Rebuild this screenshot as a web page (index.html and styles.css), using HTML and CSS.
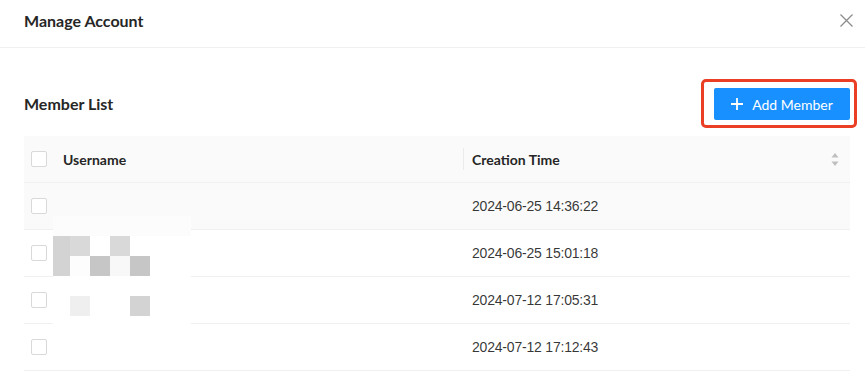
FILE: index.html
```html
<!DOCTYPE html>
<html lang="en">
<head>
<meta charset="utf-8">
<title>Manage Account</title>
<link rel="stylesheet" href="styles.css">
</head>
<body>
<div class="modal">
  <div class="modal-header">
    <div class="modal-title">Manage Account</div>
    <button class="close" aria-label="Close">
      <svg width="13" height="13" viewBox="0 0 13 13"><path d="M0.5 0.5 L12.5 12.5 M12.5 0.5 L0.5 12.5" stroke="#8c8c8c" stroke-width="1.3" fill="none"/></svg>
    </button>
  </div>
  <div class="modal-body">
    <div class="toolbar">
      <div class="section-title">Member List</div>
      <div class="add-wrap">
        <button class="btn-primary">
          <svg width="12" height="12" viewBox="0 0 12 12"><path d="M6 0 V12 M0 6 H12" stroke="#fff" stroke-width="1.8" fill="none"/></svg>
          <span>Add Member</span>
        </button>
      </div>
    </div>
    <div class="table">
      <div class="row head">
        <div class="cell sel"><span class="checkbox"></span></div>
        <div class="cell name">Username</div>
        <div class="cell time">Creation Time
          <svg class="sorter" width="8" height="13" viewBox="0 0 8 13"><path d="M4 0 L7.5 4.5 H0.5 Z M4 13 L7.5 8.5 H0.5 Z" fill="#bfbfbf"/></svg>
        </div>
      </div>
      <div class="row hover">
        <div class="cell sel"><span class="checkbox"></span></div>
        <div class="cell name"></div>
        <div class="cell time date">2024-06-25 14:36:22</div>
      </div>
      <div class="row">
        <div class="cell sel"><span class="checkbox"></span></div>
        <div class="cell name"></div>
        <div class="cell time date">2024-06-25 15:01:18</div>
      </div>
      <div class="row">
        <div class="cell sel"><span class="checkbox"></span></div>
        <div class="cell name"></div>
        <div class="cell time date">2024-07-12 17:05:31</div>
      </div>
      <div class="row">
        <div class="cell sel"><span class="checkbox"></span></div>
        <div class="cell name"></div>
        <div class="cell time date">2024-07-12 17:12:43</div>
      </div>
      <div class="mosaic">
        <i class="m0"></i><i class="m0"></i><i class="m0"></i><i class="m0"></i><i class="m0"></i><i class="m0"></i>
        <i class="m3"></i><i class="m2"></i><i></i><i class="m2"></i><i></i><i></i>
        <i class="m3"></i><i class="m1"></i><i class="m4"></i><i class="m5"></i><i class="m4"></i><i></i>
        <i></i><i></i><i></i><i></i><i></i><i></i>
        <i></i><i class="m6"></i><i></i><i></i><i class="m3"></i><i></i>
        <i></i><i></i><i></i><i></i><i></i><i></i>
      </div>
    </div>
  </div>
</div>
</body>
</html>
```

FILE: styles.css
```css
* { box-sizing: border-box; }
html, body { margin: 0; padding: 0; background: #fff; }
body {
  font-family: Lato, "Liberation Sans", Arial, sans-serif;
  color: rgba(0, 0, 0, 0.85);
  width: 865px;
  height: 374px;
  overflow: hidden;
}
.modal-header {
  height: 48px;
  border-bottom: 1px solid #f0f0f0;
  display: flex;
  align-items: center;
  justify-content: space-between;
  padding: 0 12px 6px 24px;
}
.modal-title {
  font-size: 16px;
  line-height: 22px;
  font-weight: 700;
  color: #262626;
}
.close {
  border: 0;
  background: none;
  padding: 0;
  width: 13px;
  height: 13px;
  display: flex;
}
.modal-body {
  padding: 40px 15px 0 24px;
}
.toolbar {
  display: flex;
  align-items: center;
  justify-content: space-between;
  height: 32px;
}
.section-title {
  font-size: 16px;
  line-height: 22px;
  font-weight: 700;
  color: #262626;
}
.add-wrap { position: relative; }
.add-wrap::after {
  content: "";
  position: absolute;
  top: -9px;
  left: -13px;
  right: -7px;
  bottom: -8px;
  border: 3px solid #ea3e25;
  border-radius: 5px;
  pointer-events: none;
}
.btn-primary {
  width: 136px;
  height: 32px;
  border: 0;
  border-radius: 2px;
  background: #1890ff;
  color: #fff;
  font-family: Lato, "Liberation Sans", Arial, sans-serif;
  font-size: 14px;
  display: flex;
  align-items: center;
  justify-content: center;
  gap: 9px;
  padding: 0;
}
.table {
  position: relative;
  margin-top: 16px;
}
.row {
  display: grid;
  grid-template-columns: 32px 408px 1fr;
  height: 47px;
  border-bottom: 1px solid #f0f0f0;
  align-items: center;
}
.row.head, .row.hover { background: #fafafa; }
.cell {
  height: 100%;
  display: flex;
  align-items: center;
  position: relative;
}
.cell.sel { padding-left: 7px; }
.cell.name { padding-left: 7px; }
.cell.time { padding-left: 8px; padding-right: 11px; }
.head .cell {
  font-size: 14px;
  font-weight: 700;
  color: #262626;
}
.head .cell.name::after {
  content: "";
  position: absolute;
  right: 0;
  top: 12px;
  width: 1px;
  height: 22px;
  background: #ebebeb;
}
.sorter { margin-left: auto; }
.checkbox {
  width: 16px;
  height: 16px;
  border: 1px solid #d9d9d9;
  border-radius: 2px;
  background: #fff;
  display: block;
}
.date {
  font-family: "Liberation Sans", Arial, sans-serif;
  font-size: 14px;
  letter-spacing: -0.2px;
  color: rgba(0, 0, 0, 0.8);
}
.mosaic {
  position: absolute;
  left: 29px;
  top: 80px;
  width: 138px;
  height: 108px;
  display: grid;
  grid-template-columns: 17px 20px 20px 20px 20px 41px;
  grid-template-rows: 20px 20px 20px 20px 20px 8px;
  background: #fff;
}
.mosaic i { display: block; background: #fff; }
.mosaic i.m0 { background: #fcfcfc; }
.mosaic i.m1 { background: #fdfdfd; }
.mosaic i.m2 { background: #d9d9d9; }
.mosaic i.m3 { background: #d3d3d3; }
.mosaic i.m4 { background: #c6c6c6; }
.mosaic i.m5 { background: #f8f8f8; }
.mosaic i.m6 { background: #efefef; }
```
